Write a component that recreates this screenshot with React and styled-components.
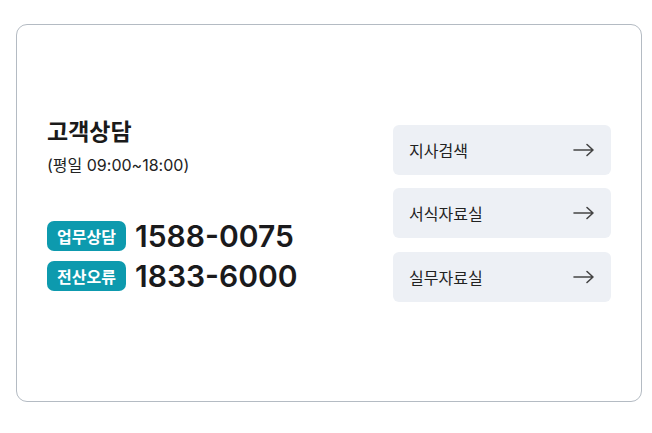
import React from "react";
import styled, { createGlobalStyle } from "styled-components";

const GlobalStyle = createGlobalStyle`
    * { box-sizing: border-box; }
    body {
        margin: 0;
        background: #fff;
        font-family: Inter, "Noto Sans CJK KR", sans-serif;
        color: #222;
    }
`;

const phones = [
    { label: "업무상담", number: "1588-0075" },
    { label: "전산오류", number: "1833-6000" },
];

const links = ["지사검색", "서식자료실", "실무자료실"];

const Arrow = () => (
    <svg width="22" height="14" viewBox="0 0 22 14" fill="none">
        <path
            d="M1 7h19M14 1.5L20 7l-6 5.5"
            stroke="#444"
            strokeWidth="1.6"
            strokeLinecap="round"
            strokeLinejoin="round"
        />
    </svg>
);

const App = () => {
    return (
        <Page>
            <GlobalStyle />
            <Card>
                <Info>
                    <Title>고객상담</Title>
                    <Hours>(평일 09:00~18:00)</Hours>
                    <Phones>
                        {phones.map((p) => (
                            <PhoneRow key={p.label}>
                                <Badge>{p.label}</Badge>
                                <Number>{p.number}</Number>
                            </PhoneRow>
                        ))}
                    </Phones>
                </Info>
                <Links>
                    {links.map((l) => (
                        <LinkButton key={l}>
                            <span>{l}</span>
                            <Arrow />
                        </LinkButton>
                    ))}
                </Links>
            </Card>
        </Page>
    );
};

const Page = styled.div`
    padding: 24px 0 0 16px;
`;
const Card = styled.div`
    width: 626px;
    height: 378px;
    border: 1px solid #b4bbc3;
    border-radius: 11px;
    padding: 0 30px;
    display: flex;
    align-items: center;
    justify-content: space-between;
`;
const Info = styled.div`
    display: flex;
    flex-direction: column;
    margin-bottom: 18px;
`;
const Title = styled.div`
    font-size: 23px;
    font-weight: 700;
    line-height: 30px;
    color: #1a1a1a;
`;
const Hours = styled.div`
    font-size: 16px;
    line-height: 22px;
    margin-top: 7px;
    color: #222;
`;
const Phones = styled.div`
    display: flex;
    flex-direction: column;
    gap: 10px;
    margin-top: 45px;
`;
const PhoneRow = styled.div`
    display: flex;
    align-items: center;
    gap: 9px;
`;
const Badge = styled.span`
    display: inline-flex;
    align-items: center;
    justify-content: center;
    width: 79px;
    height: 30px;
    border-radius: 7px;
    background: #0d9aae;
    color: #fff;
    font-size: 16px;
    font-weight: 700;
`;
const Number = styled.span`
    font-size: 30px;
    font-weight: 600;
    line-height: 30px;
    color: #1a1a1c;
`;
const Links = styled.div`
    display: flex;
    flex-direction: column;
    gap: 13.5px;
    width: 218px;
`;
const LinkButton = styled.div`
    height: 50px;
    border-radius: 6px;
    background: #edf0f5;
    display: flex;
    align-items: center;
    justify-content: space-between;
    padding: 0 16px;
    font-size: 16px;
    color: #222;
`;

export default App;
